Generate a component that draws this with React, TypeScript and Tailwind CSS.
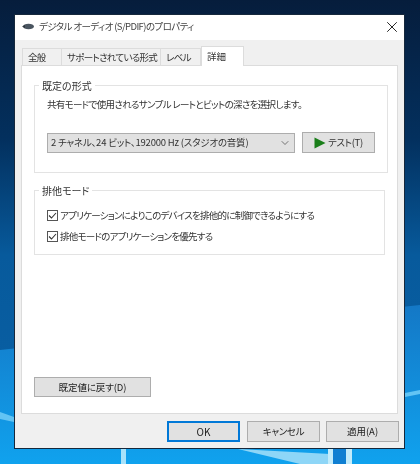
import React from 'react';
import { ChevronDown, X } from 'lucide-react';

const jpFont = { fontFamily: '"Noto Sans CJK JP", "Liberation Sans", sans-serif' };

function WinButton({ label, className = '' }: { label: string; className?: string }) {
  return (
    <button className={`flex h-[20px] items-center justify-center border border-[#adadad] bg-[#e1e1e1] text-[9.5px] text-[#222] ${className}`}>
      {label}
    </button>
  );
}

function CheckRow({ label }: { label: string }) {
  return (
    <div className="flex h-[11px] items-center gap-[2px]">
      <svg width="11" height="11" viewBox="0 0 11 11" className="shrink-0">
        <rect x="0.5" y="0.5" width="10" height="10" fill="#fff" stroke="#555" />
        <path d="M2 5.5 L4.5 8 L9 3" fill="none" stroke="#333" strokeWidth="1.1" />
      </svg>
      <span className="whitespace-nowrap text-[9.5px] leading-none tracking-[-0.75px] text-[#333]">{label}</span>
    </div>
  );
}

function Tab({ label, active, className = '' }: { label: string; active?: boolean; className?: string }) {
  if (active) {
    return (
      <div className={`z-10 -mb-px flex h-[20px] items-center border border-b-0 border-[#dcdcdc] bg-white pl-[5px] text-[9.5px] text-[#333] ${className}`}>
        {label}
      </div>
    );
  }
  return (
    <div className={`flex h-[17px] items-center whitespace-nowrap border-t border-r border-[#dcdcdc] bg-[#f0f0f0] pl-[5px] text-[9.5px] tracking-[-0.7px] text-[#333] ${className}`}>
      {label}
    </div>
  );
}

function Wallpaper() {
  return (
    <svg className="absolute inset-0" width="420" height="464" viewBox="0 0 420 464">
      <defs>
        <linearGradient id="sky" x1="0" y1="0" x2="0" y2="1">
          <stop offset="0" stopColor="#061d3c" />
          <stop offset="0.3" stopColor="#03305e" />
          <stop offset="0.55" stopColor="#075a9c" />
          <stop offset="1" stopColor="#0a62a8" />
        </linearGradient>
        <linearGradient id="glow" x1="0" y1="0" x2="0" y2="1">
          <stop offset="0" stopColor="#1478c6" />
          <stop offset="1" stopColor="#10a2ee" />
        </linearGradient>
      </defs>
      <rect width="420" height="464" fill="url(#sky)" />
      <path d="M0 350 L420 305 L420 464 L0 464 Z" fill="url(#glow)" />
      <path d="M0 412 L14 417 L14 422 L0 419 Z" fill="#62c4f4" />
      <path d="M405 393 L420 390 L420 394 L405 397 Z" fill="#62c4f4" />
      <path d="M238 449 L330 454 L330 464 L300 464 Z" fill="#8ed6f7" />
      <rect x="121" y="449" width="5" height="15" fill="#a8e2fa" />
      <rect x="328" y="449" width="5" height="15" fill="#c3ecfb" />
      <rect x="333" y="449" width="13" height="15" fill="#0f7fd2" />
      <rect x="346" y="449" width="6" height="15" fill="#c3ecfb" />
    </svg>
  );
}

export default function App() {
  return (
    <div
      className="relative h-[464px] w-[420px] overflow-hidden pt-[14px] pl-[14px] blur-[0.3px] [font-feature-settings:'palt']"
      style={jpFont}
    >
      <Wallpaper />
      <div className="relative flex h-[435px] w-[391px] flex-col border border-[#16283c] bg-[#f0f0f0]">
        {/* Title bar */}
        <div className="flex h-[25px] shrink-0 items-center bg-white pb-[2px] pl-[7px] pr-[3px]">
          <svg width="12" height="7" viewBox="0 0 12 7" className="mr-[5px]">
            <ellipse cx="6.5" cy="3.5" rx="5.5" ry="2.8" fill="#4a5560" />
            <path d="M0 3.5 L3 2 L3 5 Z" fill="#2f3840" />
          </svg>
          <span className="whitespace-nowrap text-[9.5px] tracking-[-0.6px] text-[#444]">デジタル オーディオ (S/PDIF)のプロパティ</span>
          <X className="ml-auto" size={18} strokeWidth={1.3} color="#222" />
        </div>

        {/* Tabs */}
        <div className="ml-[7px] flex h-[25px] items-end">
          <Tab label="全般" className="w-[40px] border-l" />
          <Tab label="サポートされている形式" className="w-[99px]" />
          <Tab label="レベル" className="w-[40px]" />
          <Tab label="詳細" active className="w-[43px]" />
        </div>

        {/* Tab page */}
        <div className="ml-[6px] flex h-[349px] w-[377px] flex-col border border-[#dcdcdc] bg-white px-[12px]">
          <fieldset className="mt-[13px] h-[94px] border border-[#e3e3e3] px-[12px]">
            <legend className="ml-[-8px] px-[3px] text-[10px] leading-[13px] text-[#333]">既定の形式</legend>
            <p className="mt-[6px] whitespace-nowrap text-[9.5px] leading-[13px] tracking-[-0.67px] text-[#333]">
              共有モードで使用されるサンプル レートとビットの深さを選択します。
            </p>
            <div className="mt-[21px] flex items-center gap-[7px]">
              <div className="flex h-[20px] w-[248px] items-center justify-between border border-[#adadad] bg-[#e1e1e1] pl-[3px] pr-[3px]">
                <span className="whitespace-nowrap text-[9.5px] tracking-[-0.2px] text-[#333]">2 チャネル、24 ビット、192000 Hz (スタジオの音質)</span>
                <ChevronDown size={12} strokeWidth={1.4} color="#444" />
              </div>
              <button className="flex h-[21px] w-[73px] items-center justify-center gap-[2px] border border-[#adadad] bg-[#e1e1e1] text-[9.5px] tracking-[-0.3px] text-[#333]">
                <svg width="12" height="12" viewBox="0 0 12 12">
                  <path d="M0.5 0.5 L11.5 6 L0.5 11.5 Z" fill="#1a7f1a" />
                </svg>
                テスト(T)
              </button>
            </div>
          </fieldset>

          <fieldset className="mt-[11px] h-[71px] border border-[#e3e3e3] px-[12px]">
            <legend className="ml-[-8px] px-[3px] text-[10px] leading-[13px] text-[#333]">排他モード</legend>
            <div className="mt-[13px] flex flex-col gap-[10px]">
              <CheckRow label="アプリケーションによりこのデバイスを排他的に制御できるようにする" />
              <CheckRow label="排他モードのアプリケーションを優先する" />
            </div>
          </fieldset>

          <WinButton label="既定値に戻す(D)" className="mt-[122px] w-[117px] tracking-[-0.1px]" />
        </div>

        {/* Footer buttons */}
        <div className="mt-[7px] flex items-start pl-[152px]">
          <button className="flex h-[21px] w-[73px] items-center justify-center border-2 border-[#0078d7] bg-[#e1e1e1] text-[10px] text-[#222]">OK</button>
          <WinButton label="キャンセル" className="ml-[7px] h-[21px] w-[73px] tracking-[-0.3px]" />
          <WinButton label="適用(A)" className="ml-[6px] h-[21px] w-[73px]" />
        </div>
      </div>
    </div>
  );
}
